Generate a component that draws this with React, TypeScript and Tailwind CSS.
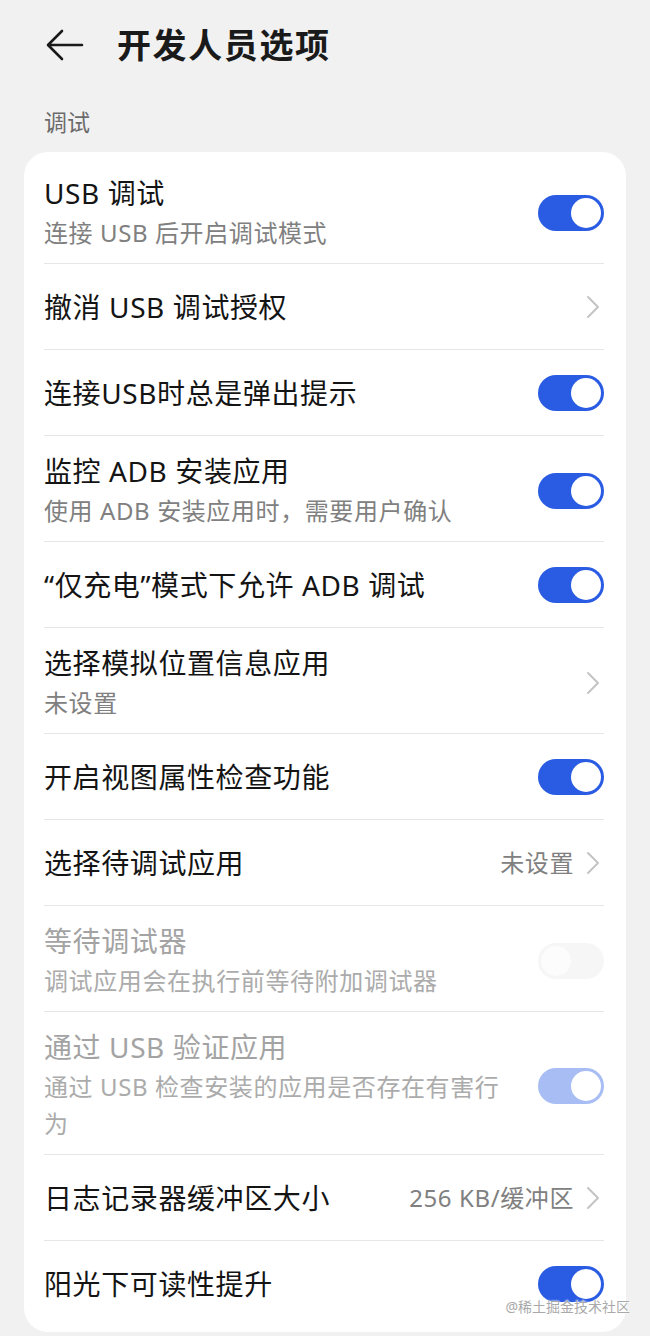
import { Fragment } from "react";

type TRow = {
  title: string;
  sub?: React.ReactNode;
  kind: "on" | "chevron" | "off-disabled" | "on-disabled";
  value?: string;
  disabled?: boolean;
};

const rows: TRow[] = [
  { title: "USB 调试", sub: "连接 USB 后开启调试模式", kind: "on" },
  { title: "撤消 USB 调试授权", kind: "chevron" },
  { title: "连接USB时总是弹出提示", kind: "on" },
  { title: "监控 ADB 安装应用", sub: "使用 ADB 安装应用时，需要用户确认", kind: "on" },
  { title: "“仅充电”模式下允许 ADB 调试", kind: "on" },
  { title: "选择模拟位置信息应用", sub: "未设置", kind: "chevron" },
  { title: "开启视图属性检查功能", kind: "on" },
  { title: "选择待调试应用", kind: "chevron", value: "未设置" },
  {
    title: "等待调试器",
    sub: "调试应用会在执行前等待附加调试器",
    kind: "off-disabled",
    disabled: true,
  },
  {
    title: "通过 USB 验证应用",
    sub: (
      <>
        通过 USB 检查安装的应用是否存在有害行
        <br />为
      </>
    ),
    kind: "on-disabled",
    disabled: true,
  },
  { title: "日志记录器缓冲区大小", kind: "chevron", value: "256 KB/缓冲区" },
  { title: "阳光下可读性提升", kind: "on" },
];

function Toggle({ kind }: { kind: TRow["kind"] }) {
  if (kind === "off-disabled") {
    return (
      <div className="w-[66px] h-[36px] rounded-full bg-[#f6f6f6] p-[3px] flex justify-start shrink-0">
        <div className="w-[30px] h-[30px] rounded-full bg-[#fcfcfc]" />
      </div>
    );
  }
  const track = kind === "on-disabled" ? "bg-[#a7bdf3]" : "bg-[#2a5be3]";
  return (
    <div className={`w-[66px] h-[36px] rounded-full ${track} p-[3px] flex justify-end shrink-0`}>
      <div className="w-[30px] h-[30px] rounded-full bg-white" />
    </div>
  );
}

function Chevron() {
  return (
    <svg width="14" height="24" viewBox="0 0 14 24" fill="none" className="shrink-0 mr-[4px]">
      <path d="M2 2 L12 12 L2 22" stroke="#c4c4c4" strokeWidth="2" strokeLinecap="round" strokeLinejoin="round" />
    </svg>
  );
}

function Row({ row }: { row: TRow }) {
  const titleColor = row.disabled ? "text-[#a3a3a3]" : "text-[#141414]";
  const subColor = row.disabled ? "text-[#ababab]" : "text-[#808080]";
  return (
    <div className={`flex items-center ${row.sub ? "pt-[17px] pb-[12px]" : "h-[85px]"}`}>
      <div className="flex-1 min-w-0">
        <div className={`text-[28px] leading-[36px] tracking-[0.6px] ${titleColor}`}>{row.title}</div>
        {row.sub && (
          <div className={`mt-[3px] text-[24px] leading-[37px] tracking-[0.6px] ${subColor}`}>{row.sub}</div>
        )}
      </div>
      {row.kind === "chevron" ? (
        <div className="flex items-center gap-[12px] ml-6">
          {row.value && (
            <span className="text-[24px] leading-[36px] tracking-[0.6px] text-[#808080]">{row.value}</span>
          )}
          <Chevron />
        </div>
      ) : (
        <div className="ml-6">
          <Toggle kind={row.kind} />
        </div>
      )}
    </div>
  );
}

export default function App() {
  return (
    <div
      className="relative w-[650px] h-[1336px] overflow-hidden bg-[#f1f1f1]"
      style={{ fontFamily: '"Noto Sans", "Noto Sans CJK SC", sans-serif' }}
    >
      <div className="h-[90px] flex items-center">
        <svg width="38" height="32" viewBox="0 0 38 32" fill="none" className="ml-[46px]">
          <path d="M36 16 H3 M16 2 L2 16 L16 30" stroke="#1a1a1a" strokeWidth="2.6" strokeLinecap="round" strokeLinejoin="round" />
        </svg>
        <h1 className="ml-[33px] text-[34px] leading-[44px] font-bold tracking-[1.6px] text-[#1a1a1a]">
          开发人员选项
        </h1>
      </div>

      <div className="h-[62px] pt-[17px] pl-[44px] text-[23px] leading-[30px] text-[#6b6b6b]">调试</div>

      <div className="mx-6 bg-white rounded-[24px] pl-5 pr-[22px] py-[6px]">
        {rows.map((row, i) => (
          <Fragment key={row.title}>
            {i > 0 && <div className="h-px bg-[#e6e6e6]" />}
            <Row row={row} />
          </Fragment>
        ))}
      </div>

      <div
        className="absolute right-[20px] top-[1297px] text-[14px] leading-[20px] text-[#a9a9a9]"
        style={{ textShadow: "0 0 2px #fff, 0 0 2px #fff" }}
      >
        @稀土掘金技术社区
      </div>
    </div>
  );
}
